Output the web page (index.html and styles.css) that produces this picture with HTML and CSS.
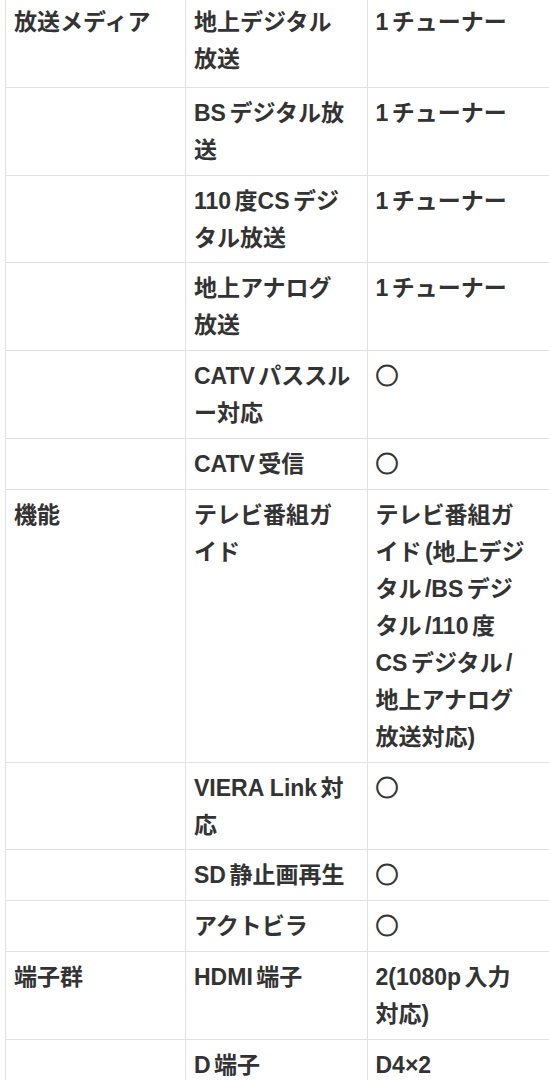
FILE: index.html
```html
<!DOCTYPE html>
<html lang="ja">
<head>
<meta charset="utf-8">
<title>仕様</title>
<link rel="stylesheet" href="styles.css">
</head>
<body>
<div class="page">
<table class="spec">
<colgroup><col class="w1"><col class="w2"><col class="w3"></colgroup>
<tbody>
<tr class="first"><th class="c1">放送メディア</th><td class="c2">地上デジタル放送</td><td class="c3"><span class="ar">1</span>チューナー</td></tr>
<tr><th class="c1"></th><td class="c2"><span class="ar">BS</span>デジタル放送</td><td class="c3"><span class="ar">1</span>チューナー</td></tr>
<tr><th class="c1"></th><td class="c2"><span class="ar">110</span>度<span class="ar">CS</span>デジタル放送</td><td class="c3"><span class="ar">1</span>チューナー</td></tr>
<tr><th class="c1"></th><td class="c2">地上アナログ放送</td><td class="c3"><span class="ar">1</span>チューナー</td></tr>
<tr><th class="c1"></th><td class="c2"><span class="ar">CATV</span>パススルー対応</td><td class="c3"><span class="maru">○</span></td></tr>
<tr><th class="c1"></th><td class="c2"><span class="ar">CATV</span>受信</td><td class="c3"><span class="maru">○</span></td></tr>
<tr><th class="c1">機能</th><td class="c2">テレビ番組ガイド</td><td class="c3">テレビ番組ガイド<span class="al">(</span>地上デジタル<span class="ab">/BS</span>デジタル<span class="ab">/110</span>度<span class="ar">CS</span>デジタル<span class="ab">/</span>地上アナログ放送対応)</td></tr>
<tr><th class="c1"></th><td class="c2"><span class="ar">VIERA Link</span>対応</td><td class="c3"><span class="maru">○</span></td></tr>
<tr><th class="c1"></th><td class="c2"><span class="ar">SD</span>静止画再生</td><td class="c3"><span class="maru">○</span></td></tr>
<tr><th class="c1"></th><td class="c2">アクトビラ</td><td class="c3"><span class="maru">○</span></td></tr>
<tr><th class="c1">端子群</th><td class="c2"><span class="ar">HDMI</span>端子</td><td class="c3"><span class="ar">2(1080p</span>入力対応)</td></tr>
<tr><th class="c1"></th><td class="c2"><span class="ar">D</span>端子</td><td class="c3">D4×2</td></tr>
</tbody>
</table>
</div>
</body>
</html>
```
FILE: styles.css
```css
html, body {
  margin: 0;
  padding: 0;
  background: #ffffff;
}

.page {
  padding-left: 5px;
  overflow: hidden;
}

.spec {
  border-collapse: collapse;
  table-layout: fixed;
  width: 545px;
  margin-top: -4px;
  font-family: "Liberation Sans", "Noto Sans CJK JP", sans-serif;
  font-size: 23px;
  line-height: 37px;
  color: #333333;
}

.w1 { width: 180px; }
.w2 { width: 181.5px; }

.spec th,
.spec td {
  border: 1px solid #e2e2e2;
  padding: 7px 8px 5.8px;
  vertical-align: top;
  text-align: left;
  font-weight: 700;
}

.spec .first > th,
.spec .first > td {
  padding-bottom: 8.8px;
}

.spec .c2 { padding-right: 14px; }
.spec .c3 { padding-right: 22px; }

.ar { margin-right: 0.15em; }
.al { margin-left: 0.15em; }
.ab { margin: 0 0.15em; }

.maru {
  font-family: "Noto Sans CJK JP", sans-serif;
  font-weight: 700;
  line-height: 20px;
  -webkit-text-stroke: 0.9px currentColor;
}
```
